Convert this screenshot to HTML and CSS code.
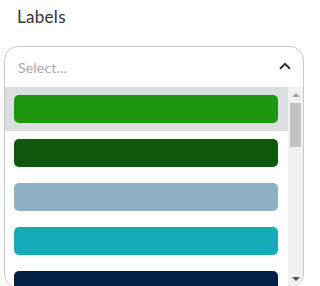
FILE: index.html
```html
<!DOCTYPE html>
<html>
<head>
<meta charset="utf-8">
<link rel="stylesheet" href="styles.css">
</head>
<body>
<div class="field">
  <div class="label">Labels</div>
  <div class="select">
    <div class="control">
      <span class="placeholder">Select...</span>
      <svg class="chevron" width="12" height="8" viewBox="0 0 12 8"><path d="M1 6.8 L6 1.8 L11 6.8" fill="none" stroke="#333" stroke-width="2"/></svg>
    </div>
    <div class="menu">
      <div class="list">
        <div class="option active"><div class="swatch c1"></div></div>
        <div class="option"><div class="swatch c2"></div></div>
        <div class="option"><div class="swatch c3"></div></div>
        <div class="option"><div class="swatch c4"></div></div>
        <div class="option"><div class="swatch c5"></div></div>
      </div>
      <div class="scrollbar">
        <div class="arrow up"></div>
        <div class="thumb"></div>
        <div class="track"></div>
        <div class="arrow down"></div>
      </div>
    </div>
  </div>
</div>
</body>
</html>
```
FILE: styles.css
```css
* { box-sizing: border-box; }
body { margin: 0; background: #fff; font-family: "Lato", "Noto Sans", sans-serif; }
.field { padding: 6px 6px 0 4px; }
.label { font-size: 17px; line-height: 22px; color: #333; padding-left: 13px; margin-bottom: 18px; letter-spacing: 0.3px; }
.select { width: 300px; border: 1px solid #c8c8c8; border-radius: 14px; overflow: hidden; height: 242px; }
.control { height: 40px; display: flex; align-items: center; justify-content: space-between; padding: 0 12px 0 13px; }
.placeholder { font-size: 14px; color: #a8a8a8; letter-spacing: 0.2px; }
.chevron { display: block; margin-bottom: 3px; }
.menu { display: flex; height: 200px; }
.list { flex: 1; overflow: hidden; }
.option { height: 44px; padding: 8px 10px 8px 9px; }
.option.active { background: #dcdfe2; }
.swatch { height: 28px; border-radius: 5px; }
.c1 { background: #1e9610; }
.c2 { background: #11560d; }
.c3 { background: #8db0c2; }
.c4 { background: #16abb9; }
.c5 { background: #022046; }
.scrollbar { width: 15px; background: #f1f1f1; display: flex; flex-direction: column; align-items: center; padding: 4px 0 4px; }
.arrow { width: 0; height: 0; border-left: 4px solid transparent; border-right: 4px solid transparent; margin: 2px 0 6px; }
.arrow.up { border-bottom: 4px solid #a3a3a3; }
.arrow.down { border-top: 4px solid #505050; margin: 0 0 2px; }
.thumb { width: 11px; height: 44px; background: #c1c1c1; }
.track { flex: 1; }
```
